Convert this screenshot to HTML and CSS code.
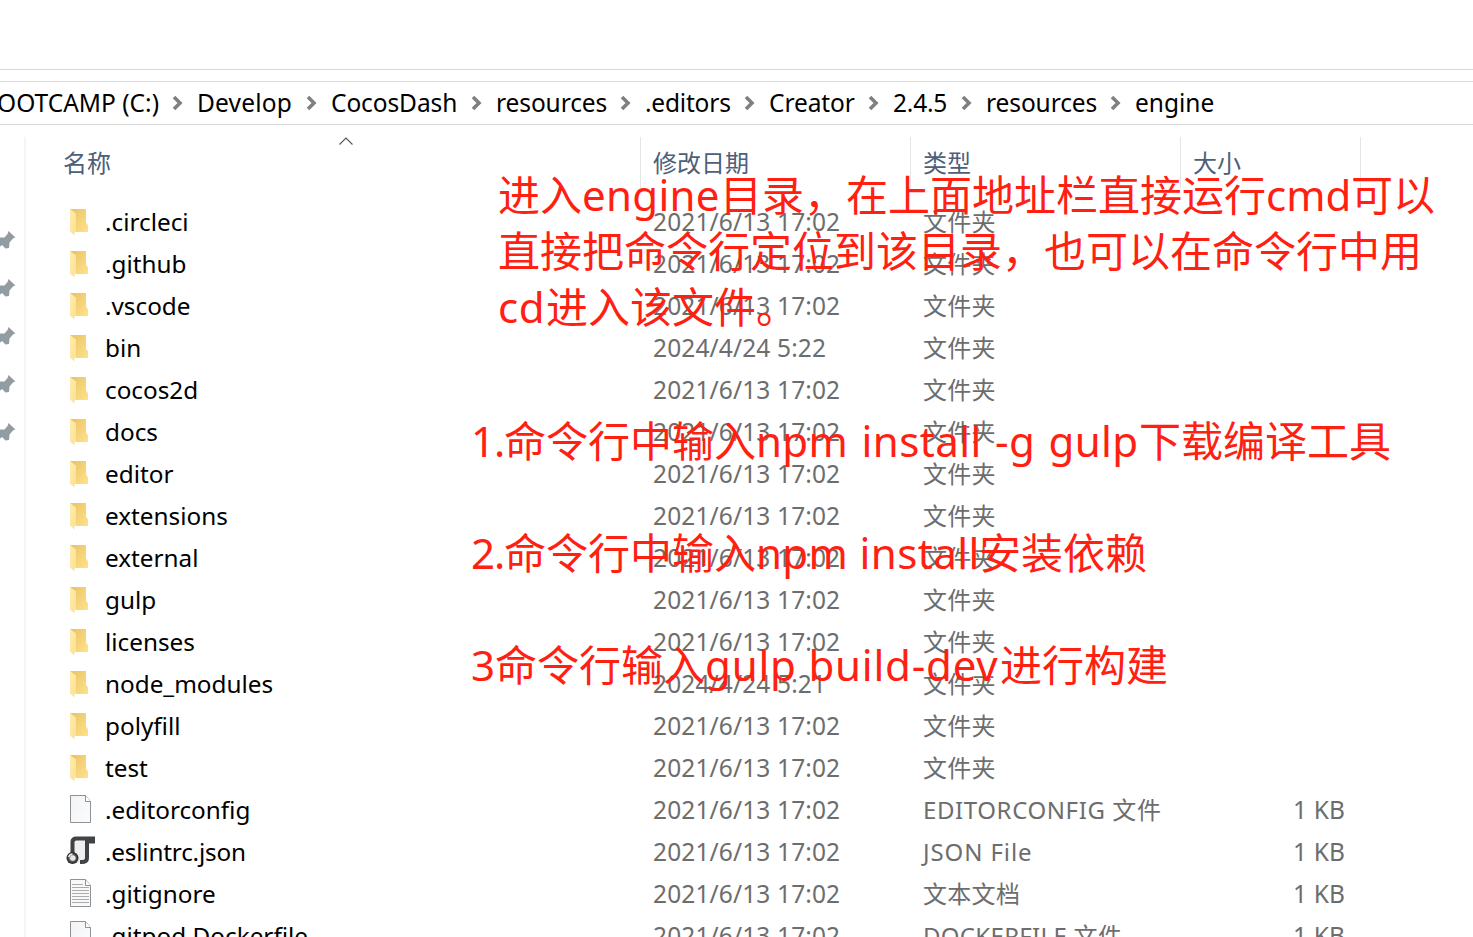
FILE: index.html
```html
<!DOCTYPE html>
<html lang="zh-CN">
<head>
<meta charset="utf-8">
<title>engine</title>
<link rel="stylesheet" href="styles.css">
</head>
<body>
<svg class="defs" width="0" height="0">
  <defs>
    <linearGradient id="back" x1="0" y1="0" x2="1" y2="1"><stop offset="0" stop-color="#e9c264"/><stop offset="1" stop-color="#ffe28a"/></linearGradient>
    <linearGradient id="flap" x1="0" y1="0" x2="1" y2="1"><stop offset="0" stop-color="#ffedaf"/><stop offset="1" stop-color="#fbdf91"/></linearGradient>
    <linearGradient id="paper" x1="0" y1="0" x2="1" y2="1"><stop offset="0" stop-color="#f2f3f4"/><stop offset="1" stop-color="#fbfcfd"/></linearGradient>
    <radialGradient id="ring"><stop offset="0" stop-color="#eee"/><stop offset=".35" stop-color="#ccc"/><stop offset=".6" stop-color="#555"/><stop offset="1" stop-color="#222"/></radialGradient>
  </defs>
  <symbol id="folder" viewBox="0 0 32 32"><path d="M5 4h16v13.500l2 3v6.500H10.500z" fill="url(#back)"/><path d="M5 4l6 4.500v18.500l-1.500-.500v4L5 26.500z" fill="url(#flap)"/></symbol>
  <symbol id="file" viewBox="0 0 32 32"><path d="M5.500 2.500h15l5 6v21h-20z" fill="url(#paper)" stroke="#8f9294"/><path d="M20.500 2.500v6h5" fill="#fff" stroke="#8f9294"/></symbol>
  <symbol id="text" viewBox="0 0 32 32"><path d="M5.500 2.500h15l5 6v21h-20z" fill="#f8f8f8" stroke="#8f9294"/><path d="M20.500 2.500v6h5" fill="#fff" stroke="#8f9294"/><path d="M7 7.500h11M7 10.500h17M7 13.500h17M7 16.500h17M7 19.500h17M7 22.500h17M7 25.500h17" stroke="#a9abad"/></symbol>
  <symbol id="json" viewBox="1 1 32 32"><path d="M7 21V6q1-3 4-3h18v5h-4v17q-1 4-5 4H10z" fill="#eef0f1"/><path d="M8.500 19V8q0-3.500 4-3.500H29v3h-6V24q0 4-5.500 4H16" fill="none" stroke="#414345" stroke-width="4"/><circle cx="8.500" cy="24" r="6" fill="url(#ring)"/><path d="M4.500 23q1.500-3 4-3" fill="none" stroke="#eee" stroke-width="1.500"/><circle cx="9" cy="24" r="2.500" fill="#e8e8e8"/></symbol>
  <symbol id="pin" viewBox="0 0 18 20"><path d="M10.500 1L17.500 7.500L15.500 8L11.500 12.500L11 18L7.500 18.500L4 15L-3 21L1 13.500L-4 9L2 7.500L6.500 7.500L9.500 4z" fill="#929da3"/></symbol>
  <symbol id="chev" viewBox="0 0 12 16"><path d="M2 2l6 6l-6 6" fill="none" stroke="#808080" stroke-width="3.600"/></symbol>
</svg>
<div class="window">
  <div class="toolbar"></div>
  <nav class="address">
    <span class="crumb c0"><span>BOOTCAMP (C:)</span><svg><use href="#chev"/></svg></span>
    <span class="crumb c1"><span>Develop</span><svg><use href="#chev"/></svg></span>
    <span class="crumb c2"><span>CocosDash</span><svg><use href="#chev"/></svg></span>
    <span class="crumb c3"><span>resources</span><svg><use href="#chev"/></svg></span>
    <span class="crumb c4"><span>.editors</span><svg><use href="#chev"/></svg></span>
    <span class="crumb c5"><span>Creator</span><svg><use href="#chev"/></svg></span>
    <span class="crumb c6"><span>2.4.5</span><svg><use href="#chev"/></svg></span>
    <span class="crumb c3"><span>resources</span><svg><use href="#chev"/></svg></span>
    <span class="crumb"><span>engine</span></span>
  </nav>
  <div class="content">
    <aside class="quick">
      <svg><use href="#pin"/></svg><svg><use href="#pin"/></svg><svg><use href="#pin"/></svg><svg><use href="#pin"/></svg><svg><use href="#pin"/></svg>
    </aside>
    <main class="list">
      <div class="head">
        <span class="h-name">名称<svg class="sort" viewBox="0 0 14 8"><path d="M.5 7.500L7 1L13.500 7.500" fill="none" stroke="#555" stroke-width="1.100"/></svg></span><span>修改日期</span><span>类型</span><span class="h-size">大小</span>
      </div>
      <div class="row"><svg><use href="#folder"/></svg><b>.circleci</b><i>2021/6/13 17:02</i><em>文件夹</em></div>
      <div class="row"><svg><use href="#folder"/></svg><b>.github</b><i>2021/6/13 17:02</i><em>文件夹</em></div>
      <div class="row"><svg><use href="#folder"/></svg><b>.vscode</b><i>2021/6/13 17:02</i><em>文件夹</em></div>
      <div class="row"><svg><use href="#folder"/></svg><b>bin</b><i>2024/4/24 5:22</i><em>文件夹</em></div>
      <div class="row"><svg><use href="#folder"/></svg><b>cocos2d</b><i>2021/6/13 17:02</i><em>文件夹</em></div>
      <div class="row"><svg><use href="#folder"/></svg><b>docs</b><i>2021/6/13 17:02</i><em>文件夹</em></div>
      <div class="row"><svg><use href="#folder"/></svg><b>editor</b><i>2021/6/13 17:02</i><em>文件夹</em></div>
      <div class="row"><svg><use href="#folder"/></svg><b>extensions</b><i>2021/6/13 17:02</i><em>文件夹</em></div>
      <div class="row"><svg><use href="#folder"/></svg><b>external</b><i>2021/6/13 17:02</i><em>文件夹</em></div>
      <div class="row"><svg><use href="#folder"/></svg><b>gulp</b><i>2021/6/13 17:02</i><em>文件夹</em></div>
      <div class="row"><svg><use href="#folder"/></svg><b>licenses</b><i>2021/6/13 17:02</i><em>文件夹</em></div>
      <div class="row"><svg><use href="#folder"/></svg><b>node_modules</b><i>2024/4/24 5:21</i><em>文件夹</em></div>
      <div class="row"><svg><use href="#folder"/></svg><b>polyfill</b><i>2021/6/13 17:02</i><em>文件夹</em></div>
      <div class="row"><svg><use href="#folder"/></svg><b>test</b><i>2021/6/13 17:02</i><em>文件夹</em></div>
      <div class="row"><svg><use href="#file"/></svg><b>.editorconfig</b><i>2021/6/13 17:02</i><em class="wide">EDITORCONFIG 文件</em><u>1 KB</u></div>
      <div class="row"><svg><use href="#json"/></svg><b class="tight">.eslintrc.json</b><i>2021/6/13 17:02</i><em class="wider">JSON File</em><u>1 KB</u></div>
      <div class="row"><svg><use href="#text"/></svg><b>.gitignore</b><i>2021/6/13 17:02</i><em>文本文档</em><u>1 KB</u></div>
      <div class="row"><svg><use href="#file"/></svg><b>.gitpod.Dockerfile</b><i>2021/6/13 17:02</i><em>DOCKERFILE 文件</em><u>1 KB</u></div>
    </main>
  </div>
  <div class="note intro">进入<span class="w-engine">engine</span>目录，在上面地址栏直接运行<span class="w-cmd">cmd</span>可以<br>直接把命令行定位到该目录，也可以在命令行中用<br><span class="w-cd">cd</span>进入该文件。</div>
  <div class="note step1"><span class="w-num">1.</span>命令行中输入<span class="w-npmg">npm install -g gulp</span>下载编译工具</div>
  <div class="note step2"><span class="w-num">2.</span>命令行中输入<span class="w-npm">npm install</span>安装依赖</div>
  <div class="note step3"><span class="w-three">3</span>命令行输入<span class="w-gulp">gulp build-dev</span>进行构建</div>
</div>
</body>
</html>
```
FILE: styles.css
```css
* { box-sizing: border-box; }
body { margin: 0; background: #fff; font-family: "Noto Sans", "Noto Sans CJK SC", sans-serif; font-size: 24px; color: #000; }
svg { display: block; flex: none; overflow: visible; }
.defs { position: absolute; }
.window { position: relative; width: 1473px; height: 937px; overflow: hidden; }
.toolbar { height: 70px; border-bottom: 1px solid #d9d9d9; }
.address { display: flex; margin-top: 11px; height: 44px; border: solid #d9d9d9; border-width: 1px 0; white-space: nowrap; font-size: 24.5px; }
.crumb { display: flex; align-items: center; justify-content: space-between; flex: none; padding-right: 13px; line-height: 42px; }
.crumb svg { width: 12px; height: 16px; }
.c0 { width: 197px; justify-content: flex-end; gap: 13px; }
.c1 { width: 134px; letter-spacing: .2px; }
.c2 { width: 165px; letter-spacing: -.1px; }
.c3 { width: 149px; letter-spacing: -.1px; }
.c4 { width: 124px; letter-spacing: -.2px; }
.c5 { width: 124px; letter-spacing: -.1px; }
.c6 { width: 93px; letter-spacing: -.2px; }
.content { display: flex; margin-top: 12px; height: 800px; }
.quick { flex: none; width: 26px; border-right: 2px solid #f5f5f5; padding-top: 93px; display: flex; flex-direction: column; gap: 28px; }
.quick svg { width: 18px; height: 20px; margin-left: -2px; }
.list { flex: none; width: 1447px; }
.head { display: flex; height: 64px; color: #4c607a; line-height: 50px; font-family: "Noto Sans CJK SC", sans-serif; }
.head span { width: 270px; height: 51px; padding-left: 12px; border-left: 1px solid #e5e5e5; }
.head .h-name { position: relative; width: 614px; padding-left: 37px; border: 0; }
.head .h-size { width: 181px; border-right: 1px solid #e5e5e5; }
.sort { position: absolute; left: 312.5px; top: 0; width: 14px; height: 8px; }
.row { display: grid; grid-template-columns: 79px 548px 270px 260px 162px; height: 42px; line-height: 42px; white-space: nowrap; align-items: center; color: #6d6d6d; }
.row svg { width: 32px; height: 32px; margin: -3px 0 0 39px; }
.row b, .row i, .row em { font-weight: 400; font-style: normal; }
.row b { color: #000; font-size: 24.3px; }
.row .tight { letter-spacing: -.2px; }
.row i, .row u { font-size: 24.5px; letter-spacing: .13px; }
.row em { letter-spacing: .3px; }
.row .wide { letter-spacing: .6px; }
.row .wider { letter-spacing: .9px; }
.row u { text-decoration: none; text-align: right; }
.note { position: absolute; white-space: nowrap; color: #ff2011; font-size: 42px; line-height: 56px; font-family: "Noto Sans CJK SC", sans-serif; }
.note span { display: inline-block; line-height: 1; font-family: "Noto Sans", sans-serif; }
.intro { left: 498px; top: 164.500px; }
.step1 { left: 471px; top: 410.500px; }
.step2 { left: 471px; top: 522.500px; }
.step3 { left: 471px; top: 634.500px; }
.w-engine { width: 138px; letter-spacing: .3px; }
.w-cmd { width: 85px; }
.w-cd { width: 48px; letter-spacing: .6px; }
.w-num { width: 33px; letter-spacing: -1px; }
.w-three { width: 24px; }
.w-npmg { width: 383px; letter-spacing: .4px; word-spacing: 2px; }
.w-npm { width: 223px; letter-spacing: .4px; }
.w-gulp { width: 295px; letter-spacing: .8px; }
```
